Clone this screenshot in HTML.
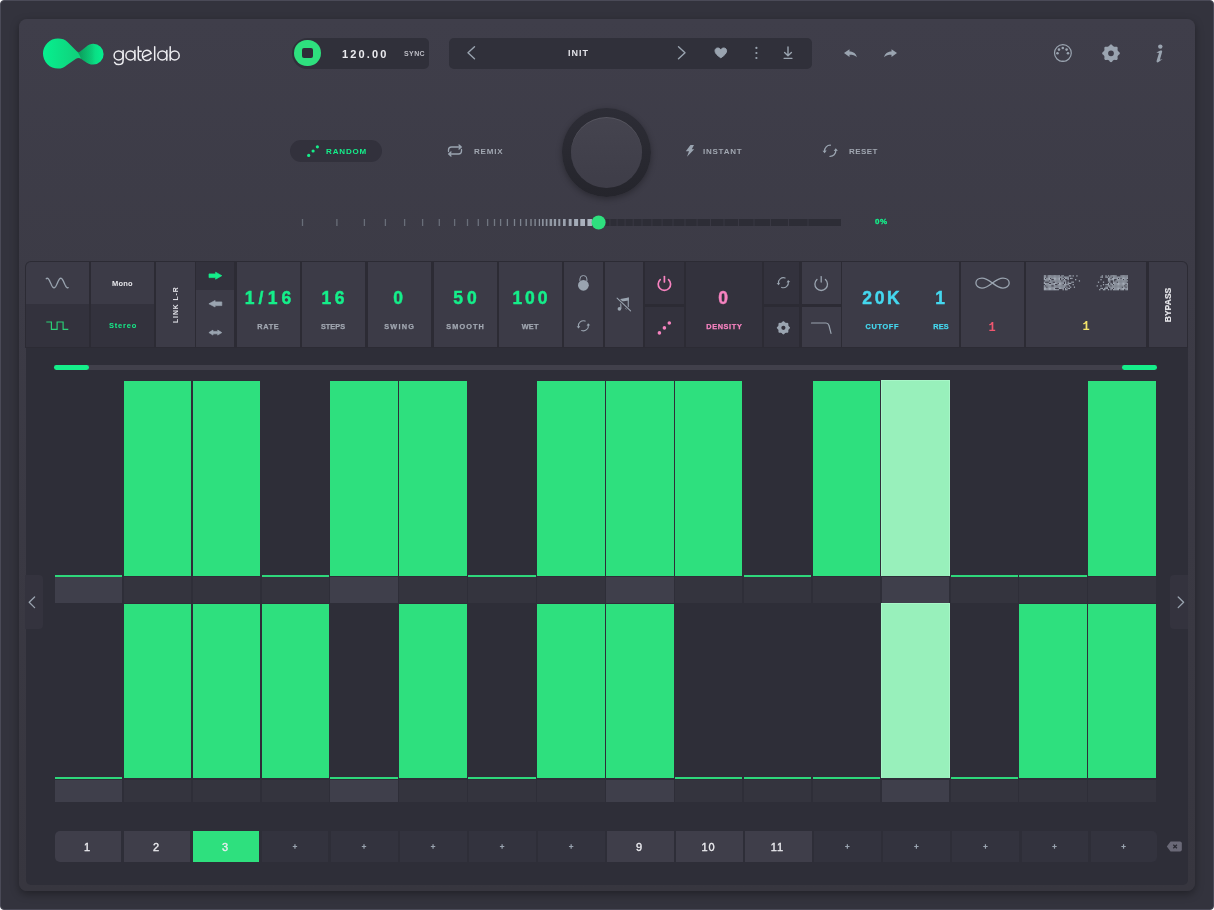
<!DOCTYPE html>
<html><head><meta charset="utf-8"><style>
*{box-sizing:border-box;margin:0;padding:0}
html,body{width:1214px;height:910px;overflow:hidden;background:#fff;font-family:"Liberation Sans",sans-serif}
.a{position:absolute}
.t{position:absolute;white-space:nowrap;font-weight:bold;line-height:1;will-change:transform}
svg{position:absolute;overflow:visible}
</style></head><body>
<div class="a" style="left:0;top:0;width:1214px;height:910px;background:#33333d;border:1px solid #4a4a57;border-radius:4px"></div>
<div class="a" style="left:19px;top:19px;width:1176px;height:872px;border-radius:8px;background:linear-gradient(#3f3e4a,#3c3b46 30%,#37363f);box-shadow:0 3px 8px rgba(0,0,0,.35)"></div>
<div class="a" style="left:25.5px;top:300px;width:1162.5px;height:584.5px;background:#2e2e38;border-radius:0 0 5px 5px"></div>
<svg style="left:0;top:0" width="1214" height="100">
<defs><linearGradient id="lg1" gradientUnits="userSpaceOnUse" x1="43" y1="0" x2="104" y2="0">
<stop offset="0" stop-color="#06f08f"/><stop offset=".55" stop-color="#10d27c"/><stop offset=".8" stop-color="#0bd880"/><stop offset="1" stop-color="#05f090"/></linearGradient></defs>
<path fill="url(#lg1)" d="M58,38.6 C62,38.6 65,39.5 68,42.5 L77,51.5 C78,52.5 79,52.5 80,51.8 L86.5,46.5 C88.5,44.8 90.8,43.8 93.2,43.8 A10.4,10.4 0 0 1 93.2,64.6 C90,64.6 87.5,63.5 85,61.5 L81,58.8 C79.5,57.8 77.5,57.8 76,58.8 L67,65 C64.5,67.5 61.5,68.6 58,68.6 A15,15 0 0 1 58,38.6 Z"/>
<linearGradient id="lg2" gradientUnits="userSpaceOnUse" x1="77" y1="0" x2="95" y2="0"><stop offset="0" stop-color="#04502c" stop-opacity=".45"/><stop offset="1" stop-color="#04502c" stop-opacity="0"/></linearGradient>
<path fill="url(#lg2)" d="M77.3,51.8 C78.2,52.4 79,52.4 80,51.8 L86.5,46.5 C88.5,44.8 90.8,43.8 93.2,43.8 L96,43.8 L96,64.6 L93.2,64.6 C90,64.6 87.5,63.5 85,61.5 L81,58.8 C80,56 78.8,53.5 77.3,51.8 Z"/>
<g fill="none" stroke="#ececf0" stroke-width="1.5" stroke-linecap="round">
<circle cx="118.6" cy="55.4" r="4.5"/><path d="M123.1,50.6 V60.5 C123.1,63.3 121,64.6 118.6,64.6 C116.7,64.6 115.3,63.6 114.6,62.3"/>
<circle cx="130.4" cy="55.4" r="4.5"/><path d="M134.9,50.6 V60.2"/>
<path d="M138.3,46.8 V57.5 C138.3,59.6 139.2,60.2 141,60.2 M138.3,51.2 H141.2"/>
<path d="M143.4,57 L151.2,53.4 C150.5,51.5 148.9,50.3 146.9,50.3 C144.4,50.3 142.4,52.5 142.4,55.4 C142.4,58.3 144.4,60.5 146.9,60.5 C148.6,60.5 150,59.6 150.8,58.3"/>
<path d="M154.7,46.8 V60.2"/>
<circle cx="162.3" cy="55.4" r="4.5"/><path d="M166.8,50.6 V60.2"/>
<circle cx="174.7" cy="55.4" r="4.5"/><path d="M170.2,46.8 V60.2"/>
</g></svg>
<div class="a" style="left:292px;top:38px;width:137px;height:31px;background:#30303a;border-radius:15.5px 5px 5px 15.5px"></div>
<div class="a" style="left:294px;top:39.8px;width:26.5px;height:26.5px;border-radius:50%;background:#2ee07e"></div>
<div class="a" style="left:302px;top:47.8px;width:10.5px;height:10.5px;border-radius:2px;background:#2e2d38"></div>
<div class="t" style="left:341.8px;top:49px;font-size:11px;letter-spacing:2.15px;color:#ebebef">120.00</div>
<div class="t" style="left:403.5px;top:49.5px;font-size:7px;letter-spacing:.4px;color:#bdbdc5">SYNC</div>
<div class="a" style="left:449px;top:38px;width:363px;height:31px;background:#30303a;border-radius:5px"></div>
<svg style="left:0;top:0" width="1" height="1"><g fill="none" stroke="#9aa4b0" stroke-width="1.4" stroke-linecap="round" stroke-linejoin="round"><path d="M474.5,46.8 L468,52.8 L474.5,58.8"/><path d="M678.5,46.8 L685,52.8 L678.5,58.8"/><path d="M788,47 V55.3 M784.6,52.4 L788,55.7 L791.4,52.4"/><path stroke-width="1.25" d="M784,58.3 H792"/></g><path fill="#9aa4b0" stroke="#9aa4b0" stroke-width="1" stroke-linejoin="round" d="M720.8,57.8 C716.9,55.3 715,53 715,50.8 C715,49.1 716.2,48 717.8,48 C719.1,48 720.1,48.7 720.8,49.6 C721.5,48.7 722.5,48 723.8,48 C725.4,48 726.6,49.1 726.6,50.8 C726.6,53 724.7,55.3 720.8,57.8 Z"/><g fill="#9aa4b0"><circle cx="756.4" cy="47.9" r="1.1"/><circle cx="756.4" cy="53" r="1.1"/><circle cx="756.4" cy="58" r="1.1"/></g></svg>
<div class="t" style="left:567.5px;top:49px;font-size:9px;letter-spacing:1px;color:#e2e2e8">INIT</div>
<svg style="left:0;top:0" width="1" height="1"><g fill="#9aa4b0"><path d="M844,53 L849.5,49.3 V51.5 C853.5,51.5 856.3,53.8 856.8,57.2 C855,55.3 852.7,54.7 849.5,54.7 V57 Z"/><path d="M897,53 L891.5,49.3 V51.5 C887.5,51.5 884.7,53.8 884.2,57.2 C886,55.3 888.3,54.7 891.5,54.7 V57 Z"/></g></svg>
<svg style="left:0;top:0" width="1" height="1"><circle cx="1062.9" cy="53.1" r="8.4" fill="none" stroke="#9aa4b0" stroke-width="1.2"/><g fill="#9aa4b0"><circle cx="1057.5" cy="53.3" r="1.3"/><circle cx="1059" cy="49.6" r="1.3"/><circle cx="1062.8" cy="48" r="1.3"/><circle cx="1066.6" cy="49.6" r="1.3"/><circle cx="1068" cy="53.3" r="1.3"/><path d="M1060.8,61.6 Q1062.8,59.4 1064.8,61.6 Z"/></g><path fill="#9aa4b0" fill-rule="evenodd" d="M1111.00,44.40 L1111.57,44.56 L1112.10,44.97 L1112.55,45.50 L1112.96,45.99 L1113.36,46.34 L1113.79,46.56 L1114.25,46.71 L1114.78,46.75 L1115.42,46.69 L1116.11,46.64 L1116.78,46.71 L1117.29,47.01 L1117.59,47.52 L1117.66,48.19 L1117.61,48.88 L1117.55,49.52 L1117.59,50.05 L1117.74,50.51 L1117.96,50.94 L1118.31,51.34 L1118.80,51.75 L1119.33,52.20 L1119.74,52.73 L1119.90,53.30 L1119.74,53.87 L1119.33,54.40 L1118.80,54.85 L1118.31,55.26 L1117.96,55.66 L1117.74,56.09 L1117.59,56.55 L1117.55,57.08 L1117.61,57.72 L1117.66,58.41 L1117.59,59.08 L1117.29,59.59 L1116.78,59.89 L1116.11,59.96 L1115.42,59.91 L1114.78,59.85 L1114.25,59.89 L1113.79,60.04 L1113.36,60.26 L1112.96,60.61 L1112.55,61.10 L1112.10,61.63 L1111.57,62.04 L1111.00,62.20 L1110.43,62.04 L1109.90,61.63 L1109.45,61.10 L1109.04,60.61 L1108.64,60.26 L1108.21,60.04 L1107.75,59.89 L1107.22,59.85 L1106.58,59.91 L1105.89,59.96 L1105.22,59.89 L1104.71,59.59 L1104.41,59.08 L1104.34,58.41 L1104.39,57.72 L1104.45,57.08 L1104.41,56.55 L1104.26,56.09 L1104.04,55.66 L1103.69,55.26 L1103.20,54.85 L1102.67,54.40 L1102.26,53.87 L1102.10,53.30 L1102.26,52.73 L1102.67,52.20 L1103.20,51.75 L1103.69,51.34 L1104.04,50.94 L1104.26,50.51 L1104.41,50.05 L1104.45,49.52 L1104.39,48.88 L1104.34,48.19 L1104.41,47.52 L1104.71,47.01 L1105.22,46.71 L1105.89,46.64 L1106.58,46.69 L1107.22,46.75 L1107.75,46.71 L1108.21,46.56 L1108.64,46.34 L1109.04,45.99 L1109.45,45.50 L1109.90,44.97 L1110.43,44.56 Z M1113.9,53.3 A2.9,2.9 0 1,0 1108.1,53.3 A2.9,2.9 0 1,0 1113.9,53.3 Z"/></svg>
<svg style="left:0;top:0" width="1" height="1"><g fill="#9aa4b0"><circle cx="1160.3" cy="46.6" r="2.2"/><path d="M1156.3,52.6 L1160.4,50.6 C1161.7,50.1 1162.4,50.9 1162.1,52.1 L1159.9,59.7 L1162.6,59.1 L1158.6,62.1 C1157.2,62.9 1156.2,62 1156.7,60.4 L1159,52.9 Z"/></g></svg>
<div class="a" style="left:289.5px;top:139.5px;width:92.5px;height:22.8px;background:#32313c;border-radius:11.4px"></div>
<svg style="left:0;top:0" width="1" height="1"><g fill="#15ee8a"><circle cx="308.7" cy="155.4" r="1.6"/><circle cx="313.1" cy="151" r="1.6"/><circle cx="317.4" cy="146.8" r="1.6"/></g></svg>
<div class="t" style="left:326px;top:147.7px;font-size:8px;letter-spacing:.85px;color:#15ee8a">RANDOM</div>
<svg style="left:0;top:0" width="1" height="1"><g fill="none" stroke="#9aa4b0" stroke-width="1.3" stroke-linecap="round" stroke-linejoin="round"><path d="M448.5,151.5 V150 C448.5,148 449.8,147 451.5,147 H461 M459,144.9 L461.3,147 L459,149.1"/><path d="M461.5,149.5 V151 C461.5,153 460.2,154 458.5,154 H449 M451,151.9 L448.7,154 L451,156.1"/></g></svg>
<div class="t" style="left:474px;top:147.7px;font-size:8px;letter-spacing:.8px;color:#a1a7b1">REMIX</div>
<svg style="left:0;top:0" width="1" height="1"><path fill="#9aa4b0" d="M690.5,144.9 L694,144.9 L691.8,149.2 L694.2,149.2 L687,156.7 L689,151.3 L685.8,151.3 Z"/></svg>
<div class="t" style="left:703px;top:147.7px;font-size:8px;letter-spacing:.75px;color:#a1a7b1">INSTANT</div>
<svg style="left:0;top:0" width="1" height="1"><path fill="none" stroke="#9aa4b0" stroke-width="1.3" stroke-linecap="round" d="M830.40,145.20 A5.6,5.6 0 0,0 824.60,151.00"/><path fill="#9aa4b0" d="M824.68,153.30 L822.49,150.77 L826.69,150.62 Z"/><path fill="none" stroke="#9aa4b0" stroke-width="1.3" stroke-linecap="round" d="M830.00,156.40 A5.6,5.6 0 0,0 835.80,150.60"/><path fill="#9aa4b0" d="M835.72,148.30 L837.91,150.83 L833.71,150.98 Z"/></svg>
<div class="t" style="left:849px;top:147.7px;font-size:8px;letter-spacing:.45px;color:#a1a7b1">RESET</div>
<div class="a" style="left:562px;top:107.5px;width:89px;height:89px;border-radius:50%;background:linear-gradient(#2d2d36,#25252c);box-shadow:0 2px 6px rgba(0,0,0,.3)"></div>
<div class="a" style="left:571px;top:117px;width:71px;height:71px;border-radius:50%;background:linear-gradient(#45444f,#3e3d48);box-shadow:inset 0 1px 0 rgba(255,255,255,.09)"></div>
<svg style="left:0;top:0" width="1" height="1"><rect x="301.85" y="219" width="1.30" height="7" fill="rgb(104, 109, 120)"/><rect x="336.25" y="219" width="1.30" height="7" fill="rgb(104, 109, 120)"/><rect x="363.75" y="219" width="1.30" height="7" fill="rgb(104, 109, 120)"/><rect x="384.75" y="219" width="1.30" height="7" fill="rgb(104, 109, 120)"/><rect x="403.95" y="219" width="1.30" height="7" fill="rgb(104, 109, 120)"/><rect x="421.95" y="219" width="1.30" height="7" fill="rgb(104, 109, 120)"/><rect x="438.65" y="219" width="1.30" height="7" fill="rgb(104, 109, 120)"/><rect x="453.95" y="219" width="1.30" height="7" fill="rgb(104, 109, 120)"/><rect x="466.85" y="219" width="1.30" height="7" fill="rgb(105, 110, 121)"/><rect x="477.65" y="219" width="1.30" height="7" fill="rgb(108, 113, 124)"/><rect x="486.95" y="219" width="1.30" height="7" fill="rgb(111, 116, 127)"/><rect x="493.85" y="219" width="1.30" height="7" fill="rgb(114, 119, 130)"/><rect x="499.95" y="219" width="1.30" height="7" fill="rgb(116, 122, 133)"/><rect x="506.75" y="219" width="1.30" height="7" fill="rgb(119, 125, 136)"/><rect x="513.85" y="219" width="1.30" height="7" fill="rgb(123, 129, 140)"/><rect x="519.95" y="219" width="1.30" height="7" fill="rgb(126, 132, 144)"/><rect x="525.55" y="219" width="1.30" height="7" fill="rgb(129, 136, 147)"/><rect x="530.35" y="219" width="1.30" height="7" fill="rgb(132, 139, 150)"/><rect x="534.45" y="219" width="1.30" height="7" fill="rgb(135, 141, 153)"/><rect x="538.75" y="219" width="1.30" height="7" fill="rgb(138, 144, 156)"/><rect x="541.95" y="219" width="1.70" height="7" fill="rgb(140, 146, 158)"/><rect x="545.75" y="219" width="1.70" height="7" fill="rgb(142, 149, 161)"/><rect x="549.60" y="219" width="2.50" height="7" fill="rgb(145, 152, 164)"/><rect x="553.80" y="219" width="2.30" height="7" fill="rgb(148, 155, 167)"/><rect x="558.30" y="219" width="2.00" height="7" fill="rgb(151, 158, 170)"/><rect x="563.00" y="219" width="2.70" height="7" fill="rgb(155, 162, 174)"/><rect x="568.70" y="219" width="2.90" height="7" fill="rgb(160, 167, 179)"/><rect x="574.10" y="219" width="4.00" height="7" fill="rgb(164, 172, 184)"/><rect x="580.30" y="219" width="4.70" height="7" fill="rgb(170, 177, 189)"/><rect x="587.45" y="219" width="4.50" height="7" fill="rgb(172, 180, 192)"/><rect x="605.4" y="219" width="235.6" height="7" fill="#2d2d36"/><rect x="609.4" y="219" width="1" height="7" fill="#393843"/><rect x="616.6" y="219" width="1" height="7" fill="#393843"/><rect x="624.6" y="219" width="1" height="7" fill="#393843"/><rect x="632.7" y="219" width="1" height="7" fill="#393843"/><rect x="641.5" y="219" width="1" height="7" fill="#393843"/><rect x="651.4" y="219" width="1" height="7" fill="#393843"/><rect x="661.6" y="219" width="1" height="7" fill="#393843"/><rect x="672.5" y="219" width="1" height="7" fill="#393843"/><rect x="684.5" y="219" width="1" height="7" fill="#393843"/><rect x="696.6" y="219" width="1" height="7" fill="#393843"/><rect x="710" y="219" width="1" height="7" fill="#393843"/><rect x="723.5" y="219" width="1" height="7" fill="#393843"/><rect x="738" y="219" width="1" height="7" fill="#393843"/><rect x="753.5" y="219" width="1" height="7" fill="#393843"/><rect x="770" y="219" width="1" height="7" fill="#393843"/><rect x="788" y="219" width="1" height="7" fill="#393843"/><rect x="807.5" y="219" width="1" height="7" fill="#393843"/><circle cx="598.6" cy="222.5" r="7" fill="#2ee07e"/></svg>
<div class="t" style="left:875px;top:218px;font-size:8px;letter-spacing:.5px;color:#15ee8a;-webkit-text-stroke:.3px #15ee8a">0%</div>
<div class="a" style="left:25px;top:260.5px;width:1162.8px;height:87px;background:#2c2b34;border-radius:6px 6px 0 0"></div>
<div class="a" style="left:25.8px;top:261.8px;width:63.00px;height:42.60px;background:#3c3b47;border-radius:5px 0 0 0"></div>
<div class="a" style="left:25.8px;top:304.4px;width:63.00px;height:42.60px;background:#33323d;"></div>
<div class="a" style="left:90.8px;top:261.8px;width:63.70px;height:42.60px;background:#3c3b47;"></div>
<div class="a" style="left:90.8px;top:304.4px;width:63.70px;height:42.60px;background:#33323d;"></div>
<div class="a" style="left:156px;top:261.8px;width:38.80px;height:85.20px;background:#3c3b47;"></div>
<div class="a" style="left:196.4px;top:261.8px;width:37.50px;height:28.20px;background:#33323d;"></div>
<div class="a" style="left:196.4px;top:290px;width:37.50px;height:57.00px;background:#3c3b47;"></div>
<div class="a" style="left:237px;top:261.8px;width:63.20px;height:85.20px;background:#3c3b47;"></div>
<div class="a" style="left:302px;top:261.8px;width:63.40px;height:85.20px;background:#3c3b47;"></div>
<div class="a" style="left:367.7px;top:261.8px;width:63.30px;height:85.20px;background:#3c3b47;"></div>
<div class="a" style="left:433.9px;top:261.8px;width:63.40px;height:85.20px;background:#3c3b47;"></div>
<div class="a" style="left:499.2px;top:261.8px;width:63.00px;height:85.20px;background:#3c3b47;"></div>
<div class="a" style="left:563.9px;top:261.8px;width:38.90px;height:85.20px;background:#3c3b47;"></div>
<div class="a" style="left:604.7px;top:261.8px;width:38.30px;height:85.20px;background:#3c3b47;"></div>
<div class="a" style="left:644.9px;top:261.8px;width:38.70px;height:42.70px;background:#33323d;"></div>
<div class="a" style="left:644.9px;top:306.5px;width:38.70px;height:40.50px;background:#33323d;"></div>
<div class="a" style="left:685.6px;top:261.8px;width:76.30px;height:85.20px;background:#33323d;"></div>
<div class="a" style="left:764.3px;top:261.8px;width:34.70px;height:42.70px;background:#33323d;"></div>
<div class="a" style="left:764.3px;top:306.5px;width:34.70px;height:40.50px;background:#33323d;"></div>
<div class="a" style="left:801.6px;top:261.8px;width:39.20px;height:42.70px;background:#3c3b47;"></div>
<div class="a" style="left:801.6px;top:306.5px;width:39.20px;height:40.50px;background:#3c3b47;"></div>
<div class="a" style="left:842.4px;top:261.8px;width:116.50px;height:85.20px;background:#3c3b47;"></div>
<div class="a" style="left:961px;top:261.8px;width:63.10px;height:85.20px;background:#3c3b47;"></div>
<div class="a" style="left:1026.2px;top:261.8px;width:120.10px;height:85.20px;background:#3c3b47;"></div>
<div class="a" style="left:1148.7px;top:261.8px;width:38.10px;height:85.20px;background:#3c3b47;border-radius:0 5px 0 0"></div>
<svg style="left:0;top:0" width="1" height="1"><path fill="none" stroke="#9aa4b0" stroke-width="1.3" stroke-linecap="round" stroke-linejoin="round" d="M46.20,278.70 L46.57,278.40 L46.93,278.24 L47.30,278.21 L47.67,278.31 L48.03,278.55 L48.40,278.92 L48.77,279.40 L49.13,279.99 L49.50,280.66 L49.87,281.40 L50.23,282.19 L50.60,283.00 L50.97,283.81 L51.33,284.60 L51.70,285.34 L52.07,286.01 L52.43,286.60 L52.80,287.08 L53.17,287.45 L53.53,287.69 L53.90,287.79 L54.27,287.76 L54.63,287.60 L55.00,287.30 L55.37,286.87 L55.73,286.34 L56.10,285.71 L56.47,285.01 L56.83,284.24 L57.20,283.44 L57.57,282.63 L57.93,281.83 L58.30,281.06 L58.67,280.35 L59.03,279.71 L59.40,279.17 L59.77,278.74 L60.13,278.43 L60.50,278.25 L60.87,278.20 L61.23,278.30 L61.60,278.52 L61.97,278.88 L62.33,279.35 L62.70,279.93 L63.07,280.60 L63.43,281.34 L63.80,282.12 L64.17,282.93 L64.53,283.74 L64.90,284.53 L65.27,285.27 L65.63,285.95 L66.00,286.55 L66.37,287.04 L66.73,287.42 L67.10,287.67 L67.47,287.79 L67.83,287.77 L68.20,287.62"/><path fill="none" stroke="#2bd277" stroke-width="1.15" d="M46.3,322 H51.4 V329.3 H57.1 V322 H63.1 V329.3 H68.3"/></svg>
<div class="t" style="left:111.8px;top:279.5px;font-size:7.5px;letter-spacing:.2px;color:#e6e6ea">Mono</div>
<div class="t" style="left:108.8px;top:321.5px;font-size:7.5px;letter-spacing:.8px;color:#15ee8a">Stereo</div>
<div class="t" style="left:157.5px;top:301.7px;width:36px;text-align:center;font-size:6.8px;letter-spacing:.95px;color:#e2e2e8;transform:rotate(-90deg);transform-origin:18px 3px">LINK L-R</div>
<svg style="left:0;top:0" width="1" height="1"><path fill="#15ee8a" stroke="#15ee8a" stroke-width=".7" stroke-linejoin="round" d="M209,273.9 H215.6 V272.2 L221.8,275.7 L215.6,279.2 V277.6 H209 Z"/><path fill="#9aa4b0" stroke="#9aa4b0" stroke-width=".7" stroke-linejoin="round" d="M221.8,301.9 H215.1 V300.5 L208.9,303.8 L215.1,307 V305.6 H221.8 Z"/><path fill="#9aa4b0" stroke="#9aa4b0" stroke-width=".7" stroke-linejoin="round" d="M208.9,332.6 L213,330.1 V331.4 H217.7 V330.1 L221.8,332.6 L217.7,335.1 V333.8 H213 V335.1 Z"/></svg>
<div class="t" style="left:208.10000000000002px;top:290px;width:120px;text-align:center;font-size:17.5px;letter-spacing:4.2px;text-indent:4.2px;color:#15ee8a;-webkit-text-stroke:.45px #15ee8a">1/16</div>
<div class="t" style="left:208.10000000000002px;top:323px;width:120px;text-align:center;font-size:7.3px;letter-spacing:0.65px;text-indent:0.65px;color:#a1a7b1;-webkit-text-stroke:.25px #a1a7b1">RATE</div>
<div class="t" style="left:273.4px;top:290px;width:120px;text-align:center;font-size:17.5px;letter-spacing:3.3px;text-indent:3.3px;color:#15ee8a;-webkit-text-stroke:.45px #15ee8a">16</div>
<div class="t" style="left:273.4px;top:323px;width:120px;text-align:center;font-size:7.3px;letter-spacing:0.05px;text-indent:0.05px;color:#a1a7b1;-webkit-text-stroke:.25px #a1a7b1">STEPS</div>
<div class="t" style="left:337.9px;top:290px;width:120px;text-align:center;font-size:17.5px;letter-spacing:2.5px;text-indent:2.5px;color:#15ee8a;-webkit-text-stroke:.45px #15ee8a">0</div>
<div class="t" style="left:338.5px;top:323px;width:120px;text-align:center;font-size:7.3px;letter-spacing:1.25px;text-indent:1.25px;color:#a1a7b1;-webkit-text-stroke:.25px #a1a7b1">SWING</div>
<div class="t" style="left:404.5px;top:290px;width:120px;text-align:center;font-size:17.5px;letter-spacing:3.8px;text-indent:3.8px;color:#15ee8a;-webkit-text-stroke:.45px #15ee8a">50</div>
<div class="t" style="left:404.8px;top:323px;width:120px;text-align:center;font-size:7.3px;letter-spacing:1.1px;text-indent:1.1px;color:#a1a7b1;-webkit-text-stroke:.25px #a1a7b1">SMOOTH</div>
<div class="t" style="left:470.20000000000005px;top:290px;width:120px;text-align:center;font-size:17.5px;letter-spacing:3.0px;text-indent:3.0px;color:#15ee8a;-webkit-text-stroke:.45px #15ee8a">100</div>
<div class="t" style="left:470.20000000000005px;top:323px;width:120px;text-align:center;font-size:7.3px;letter-spacing:0.25px;text-indent:0.25px;color:#a1a7b1;-webkit-text-stroke:.25px #a1a7b1">WET</div>
<div class="t" style="left:662.7px;top:290px;width:120px;text-align:center;font-size:17.5px;letter-spacing:2.5px;text-indent:2.5px;color:#f783c0;-webkit-text-stroke:.45px #f783c0">0</div>
<div class="t" style="left:663.5px;top:323px;width:120px;text-align:center;font-size:7.3px;letter-spacing:0.65px;text-indent:0.65px;color:#f783c0;-webkit-text-stroke:.25px #f783c0">DENSITY</div>
<div class="t" style="left:821.3px;top:290px;width:120px;text-align:center;font-size:17.5px;letter-spacing:2.7px;text-indent:2.7px;color:#45d8ef;-webkit-text-stroke:.45px #45d8ef">20K</div>
<div class="t" style="left:822px;top:323px;width:120px;text-align:center;font-size:7.3px;letter-spacing:0.7px;text-indent:0.7px;color:#45d8ef;-webkit-text-stroke:.25px #45d8ef">CUTOFF</div>
<div class="t" style="left:879.7px;top:290px;width:120px;text-align:center;font-size:17.5px;letter-spacing:2.5px;text-indent:2.5px;color:#45d8ef;-webkit-text-stroke:.45px #45d8ef">1</div>
<div class="t" style="left:881.1px;top:323px;width:120px;text-align:center;font-size:7.3px;letter-spacing:0.2px;text-indent:0.2px;color:#45d8ef;-webkit-text-stroke:.25px #45d8ef">RES</div>
<div class="t" style="left:961.6px;top:321.6px;width:60px;text-align:center;font-size:12px;font-family:'Liberation Mono',monospace;color:#f0566f">1</div>
<div class="t" style="left:1055.6px;top:321.3px;width:60px;text-align:center;font-size:12px;font-family:'Liberation Mono',monospace;color:#f2e36b">1</div>
<div class="t" style="left:1150px;top:300.8px;width:36px;text-align:center;font-size:8.5px;letter-spacing:.05px;text-indent:.05px;color:#e6e6ea;-webkit-text-stroke:.2px #e6e6ea;transform:rotate(-90deg);transform-origin:18px 4px">BYPASS</div>
<svg style="left:0;top:0" width="1" height="1"><path fill="none" stroke="#9aa4b0" stroke-width="1" d="M579.9,281 V279 A3.5,3.5 0 0,1 586.9,279 V281"/><circle cx="583.4" cy="285.3" r="5.4" fill="#9aa4b0"/><path fill="none" stroke="#9aa4b0" stroke-width="1.1" stroke-linecap="round" d="M585.11,321.10 A5.0,5.0 0 0,0 578.45,326.50"/><path fill="#9aa4b0" d="M578.72,328.46 L576.62,326.45 L580.19,325.95 Z"/><path fill="none" stroke="#9aa4b0" stroke-width="1.1" stroke-linecap="round" d="M581.69,330.50 A5.0,5.0 0 0,0 588.35,325.10"/><path fill="#9aa4b0" d="M588.08,323.14 L590.18,325.15 L586.61,325.65 Z"/><path fill="none" stroke="#9aa4b0" stroke-width="1.1" stroke-linecap="round" d="M785.11,278.00 A5.0,5.0 0 0,0 778.45,283.40"/><path fill="#9aa4b0" d="M778.72,285.36 L776.62,283.35 L780.19,282.85 Z"/><path fill="none" stroke="#9aa4b0" stroke-width="1.1" stroke-linecap="round" d="M781.69,287.40 A5.0,5.0 0 0,0 788.35,282.00"/><path fill="#9aa4b0" d="M788.08,280.04 L790.18,282.05 L786.61,282.55 Z"/><g fill="#9aa4b0"><circle cx="619.4" cy="308.9" r="1.8"/><rect x="620.3" y="299.3" width="1.1" height="9.6"/><path d="M620.3,299 L628.8,297.6 V300.4 L620.3,301.8 Z"/><rect x="627.7" y="297.6" width="1.1" height="10"/><circle cx="626.8" cy="307.8" r="1.6"/></g><path stroke="#3c3b47" stroke-width="2.8" d="M617.1,298.2 L630.6,310.9"/><path stroke="#9aa4b0" stroke-width="1.1" stroke-linecap="round" d="M617.1,298.2 L630.6,310.9"/><g fill="none" stroke="#f783c0" stroke-width="1.7" stroke-linecap="round"><path d="M668.55,279.59 A6.2,6.2 0 1,1 660.25,279.59"/><path d="M664.4,276.6 V282"/></g><g fill="#f783c0"><circle cx="659.4" cy="332.9" r="1.8"/><circle cx="664.4" cy="327.9" r="1.8"/><circle cx="669.3" cy="323" r="1.8"/></g><path fill="#9aa4b0" fill-rule="evenodd" d="M783.40,321.20 L783.83,321.31 L784.22,321.60 L784.56,321.97 L784.87,322.31 L785.18,322.56 L785.50,322.72 L785.85,322.84 L786.24,322.88 L786.70,322.86 L787.21,322.84 L787.69,322.91 L788.07,323.13 L788.29,323.51 L788.36,323.99 L788.34,324.50 L788.32,324.96 L788.36,325.35 L788.48,325.70 L788.64,326.02 L788.89,326.33 L789.23,326.64 L789.60,326.98 L789.89,327.37 L790.00,327.80 L789.89,328.23 L789.60,328.62 L789.23,328.96 L788.89,329.27 L788.64,329.58 L788.48,329.90 L788.36,330.25 L788.32,330.64 L788.34,331.10 L788.36,331.61 L788.29,332.09 L788.07,332.47 L787.69,332.69 L787.21,332.76 L786.70,332.74 L786.24,332.72 L785.85,332.76 L785.50,332.88 L785.18,333.04 L784.87,333.29 L784.56,333.63 L784.22,334.00 L783.83,334.29 L783.40,334.40 L782.97,334.29 L782.58,334.00 L782.24,333.63 L781.93,333.29 L781.62,333.04 L781.30,332.88 L780.95,332.76 L780.56,332.72 L780.10,332.74 L779.59,332.76 L779.11,332.69 L778.73,332.47 L778.51,332.09 L778.44,331.61 L778.46,331.10 L778.48,330.64 L778.44,330.25 L778.32,329.90 L778.16,329.58 L777.91,329.27 L777.57,328.96 L777.20,328.62 L776.91,328.23 L776.80,327.80 L776.91,327.37 L777.20,326.98 L777.57,326.64 L777.91,326.33 L778.16,326.02 L778.32,325.70 L778.44,325.35 L778.48,324.96 L778.46,324.50 L778.44,323.99 L778.51,323.51 L778.73,323.13 L779.11,322.91 L779.59,322.84 L780.10,322.86 L780.56,322.88 L780.95,322.84 L781.30,322.72 L781.62,322.56 L781.93,322.31 L782.24,321.97 L782.58,321.60 L782.97,321.31 Z M785.5,327.8 A2.1,2.1 0 1,0 781.3,327.8 A2.1,2.1 0 1,0 785.5,327.8 Z"/><g fill="none" stroke="#9aa4b0" stroke-width="1.3" stroke-linecap="round"><path d="M825.42,279.52 A6.3,6.3 0 1,1 816.98,279.52"/><path d="M821.2,276.6 V282"/></g><path fill="none" stroke="#9aa4b0" stroke-width="1.2" stroke-linecap="round" d="M811.5,323 H826 C828,323 828.5,324 829,325.5 L831,333.3"/><path fill="none" stroke="#9aa4b0" stroke-width="1.3" d="M992.4,283 C989,280.4 986,278.1 982,278.1 C978.3,278.1 975.9,280.3 975.9,283 C975.9,285.7 978.3,288.1 982,288.1 C986,288.1 989,285.6 992.4,283 C995.8,280.4 999,278.1 1003,278.1 C1006.7,278.1 1009.2,280.3 1009.2,283 C1009.2,285.7 1006.7,288.1 1003,288.1 C999,288.1 995.8,285.6 992.4,283 Z"/></svg>
<svg style="left:0;top:0" width="1" height="1"><g fill="#a3abb6"><rect x="1043.80" y="275.30" width="1.25" height="1.25"/><rect x="1045.05" y="275.30" width="1.25" height="1.25"/><rect x="1047.55" y="275.30" width="1.25" height="1.25"/><rect x="1048.80" y="275.30" width="1.25" height="1.25"/><rect x="1050.05" y="275.30" width="1.25" height="1.25"/><rect x="1051.30" y="275.30" width="1.25" height="1.25"/><rect x="1052.55" y="275.30" width="1.25" height="1.25"/><rect x="1053.80" y="275.30" width="1.25" height="1.25"/><rect x="1055.05" y="275.30" width="1.25" height="1.25"/><rect x="1056.30" y="275.30" width="1.25" height="1.25"/><rect x="1057.55" y="275.30" width="1.25" height="1.25"/><rect x="1058.80" y="275.30" width="1.25" height="1.25"/><rect x="1061.30" y="275.30" width="1.25" height="1.25"/><rect x="1062.55" y="275.30" width="1.25" height="1.25"/><rect x="1068.80" y="275.30" width="1.25" height="1.25"/><rect x="1070.05" y="275.30" width="1.25" height="1.25"/><rect x="1072.55" y="275.30" width="1.25" height="1.25"/><rect x="1076.30" y="275.30" width="1.25" height="1.25"/><rect x="1126.65" y="275.30" width="1.25" height="1.25"/><rect x="1125.40" y="275.30" width="1.25" height="1.25"/><rect x="1124.15" y="275.30" width="1.25" height="1.25"/><rect x="1122.90" y="275.30" width="1.25" height="1.25"/><rect x="1121.65" y="275.30" width="1.25" height="1.25"/><rect x="1120.40" y="275.30" width="1.25" height="1.25"/><rect x="1115.40" y="275.30" width="1.25" height="1.25"/><rect x="1114.15" y="275.30" width="1.25" height="1.25"/><rect x="1112.90" y="275.30" width="1.25" height="1.25"/><rect x="1111.65" y="275.30" width="1.25" height="1.25"/><rect x="1110.40" y="275.30" width="1.25" height="1.25"/><rect x="1107.90" y="275.30" width="1.25" height="1.25"/><rect x="1105.40" y="275.30" width="1.25" height="1.25"/><rect x="1101.65" y="275.30" width="1.25" height="1.25"/><rect x="1043.80" y="276.55" width="1.25" height="1.25"/><rect x="1045.05" y="276.55" width="1.25" height="1.25"/><rect x="1047.55" y="276.55" width="1.25" height="1.25"/><rect x="1048.80" y="276.55" width="1.25" height="1.25"/><rect x="1050.05" y="276.55" width="1.25" height="1.25"/><rect x="1051.30" y="276.55" width="1.25" height="1.25"/><rect x="1052.55" y="276.55" width="1.25" height="1.25"/><rect x="1053.80" y="276.55" width="1.25" height="1.25"/><rect x="1055.05" y="276.55" width="1.25" height="1.25"/><rect x="1056.30" y="276.55" width="1.25" height="1.25"/><rect x="1057.55" y="276.55" width="1.25" height="1.25"/><rect x="1058.80" y="276.55" width="1.25" height="1.25"/><rect x="1060.05" y="276.55" width="1.25" height="1.25"/><rect x="1061.30" y="276.55" width="1.25" height="1.25"/><rect x="1063.80" y="276.55" width="1.25" height="1.25"/><rect x="1065.05" y="276.55" width="1.25" height="1.25"/><rect x="1066.30" y="276.55" width="1.25" height="1.25"/><rect x="1067.55" y="276.55" width="1.25" height="1.25"/><rect x="1126.65" y="276.55" width="1.25" height="1.25"/><rect x="1125.40" y="276.55" width="1.25" height="1.25"/><rect x="1124.15" y="276.55" width="1.25" height="1.25"/><rect x="1122.90" y="276.55" width="1.25" height="1.25"/><rect x="1121.65" y="276.55" width="1.25" height="1.25"/><rect x="1120.40" y="276.55" width="1.25" height="1.25"/><rect x="1119.15" y="276.55" width="1.25" height="1.25"/><rect x="1117.90" y="276.55" width="1.25" height="1.25"/><rect x="1116.65" y="276.55" width="1.25" height="1.25"/><rect x="1115.40" y="276.55" width="1.25" height="1.25"/><rect x="1114.15" y="276.55" width="1.25" height="1.25"/><rect x="1112.90" y="276.55" width="1.25" height="1.25"/><rect x="1110.40" y="276.55" width="1.25" height="1.25"/><rect x="1109.15" y="276.55" width="1.25" height="1.25"/><rect x="1106.65" y="276.55" width="1.25" height="1.25"/><rect x="1105.40" y="276.55" width="1.25" height="1.25"/><rect x="1101.65" y="276.55" width="1.25" height="1.25"/><rect x="1100.40" y="276.55" width="1.25" height="1.25"/><rect x="1043.80" y="277.80" width="1.25" height="1.25"/><rect x="1046.30" y="277.80" width="1.25" height="1.25"/><rect x="1047.55" y="277.80" width="1.25" height="1.25"/><rect x="1048.80" y="277.80" width="1.25" height="1.25"/><rect x="1051.30" y="277.80" width="1.25" height="1.25"/><rect x="1052.55" y="277.80" width="1.25" height="1.25"/><rect x="1053.80" y="277.80" width="1.25" height="1.25"/><rect x="1055.05" y="277.80" width="1.25" height="1.25"/><rect x="1056.30" y="277.80" width="1.25" height="1.25"/><rect x="1057.55" y="277.80" width="1.25" height="1.25"/><rect x="1058.80" y="277.80" width="1.25" height="1.25"/><rect x="1061.30" y="277.80" width="1.25" height="1.25"/><rect x="1062.55" y="277.80" width="1.25" height="1.25"/><rect x="1065.05" y="277.80" width="1.25" height="1.25"/><rect x="1066.30" y="277.80" width="1.25" height="1.25"/><rect x="1067.55" y="277.80" width="1.25" height="1.25"/><rect x="1070.05" y="277.80" width="1.25" height="1.25"/><rect x="1071.30" y="277.80" width="1.25" height="1.25"/><rect x="1126.65" y="277.80" width="1.25" height="1.25"/><rect x="1125.40" y="277.80" width="1.25" height="1.25"/><rect x="1124.15" y="277.80" width="1.25" height="1.25"/><rect x="1122.90" y="277.80" width="1.25" height="1.25"/><rect x="1121.65" y="277.80" width="1.25" height="1.25"/><rect x="1119.15" y="277.80" width="1.25" height="1.25"/><rect x="1116.65" y="277.80" width="1.25" height="1.25"/><rect x="1115.40" y="277.80" width="1.25" height="1.25"/><rect x="1114.15" y="277.80" width="1.25" height="1.25"/><rect x="1112.90" y="277.80" width="1.25" height="1.25"/><rect x="1111.65" y="277.80" width="1.25" height="1.25"/><rect x="1109.15" y="277.80" width="1.25" height="1.25"/><rect x="1107.90" y="277.80" width="1.25" height="1.25"/><rect x="1043.80" y="279.05" width="1.25" height="1.25"/><rect x="1045.05" y="279.05" width="1.25" height="1.25"/><rect x="1046.30" y="279.05" width="1.25" height="1.25"/><rect x="1047.55" y="279.05" width="1.25" height="1.25"/><rect x="1048.80" y="279.05" width="1.25" height="1.25"/><rect x="1050.05" y="279.05" width="1.25" height="1.25"/><rect x="1053.80" y="279.05" width="1.25" height="1.25"/><rect x="1055.05" y="279.05" width="1.25" height="1.25"/><rect x="1056.30" y="279.05" width="1.25" height="1.25"/><rect x="1057.55" y="279.05" width="1.25" height="1.25"/><rect x="1058.80" y="279.05" width="1.25" height="1.25"/><rect x="1061.30" y="279.05" width="1.25" height="1.25"/><rect x="1063.80" y="279.05" width="1.25" height="1.25"/><rect x="1067.55" y="279.05" width="1.25" height="1.25"/><rect x="1075.05" y="279.05" width="1.25" height="1.25"/><rect x="1125.40" y="279.05" width="1.25" height="1.25"/><rect x="1124.15" y="279.05" width="1.25" height="1.25"/><rect x="1121.65" y="279.05" width="1.25" height="1.25"/><rect x="1120.40" y="279.05" width="1.25" height="1.25"/><rect x="1119.15" y="279.05" width="1.25" height="1.25"/><rect x="1117.90" y="279.05" width="1.25" height="1.25"/><rect x="1116.65" y="279.05" width="1.25" height="1.25"/><rect x="1112.90" y="279.05" width="1.25" height="1.25"/><rect x="1111.65" y="279.05" width="1.25" height="1.25"/><rect x="1110.40" y="279.05" width="1.25" height="1.25"/><rect x="1109.15" y="279.05" width="1.25" height="1.25"/><rect x="1107.90" y="279.05" width="1.25" height="1.25"/><rect x="1100.40" y="279.05" width="1.25" height="1.25"/><rect x="1045.05" y="280.30" width="1.25" height="1.25"/><rect x="1046.30" y="280.30" width="1.25" height="1.25"/><rect x="1047.55" y="280.30" width="1.25" height="1.25"/><rect x="1050.05" y="280.30" width="1.25" height="1.25"/><rect x="1051.30" y="280.30" width="1.25" height="1.25"/><rect x="1052.55" y="280.30" width="1.25" height="1.25"/><rect x="1053.80" y="280.30" width="1.25" height="1.25"/><rect x="1055.05" y="280.30" width="1.25" height="1.25"/><rect x="1056.30" y="280.30" width="1.25" height="1.25"/><rect x="1057.55" y="280.30" width="1.25" height="1.25"/><rect x="1058.80" y="280.30" width="1.25" height="1.25"/><rect x="1060.05" y="280.30" width="1.25" height="1.25"/><rect x="1062.55" y="280.30" width="1.25" height="1.25"/><rect x="1063.80" y="280.30" width="1.25" height="1.25"/><rect x="1065.05" y="280.30" width="1.25" height="1.25"/><rect x="1078.80" y="280.30" width="1.25" height="1.25"/><rect x="1126.65" y="280.30" width="1.25" height="1.25"/><rect x="1125.40" y="280.30" width="1.25" height="1.25"/><rect x="1124.15" y="280.30" width="1.25" height="1.25"/><rect x="1122.90" y="280.30" width="1.25" height="1.25"/><rect x="1121.65" y="280.30" width="1.25" height="1.25"/><rect x="1120.40" y="280.30" width="1.25" height="1.25"/><rect x="1119.15" y="280.30" width="1.25" height="1.25"/><rect x="1117.90" y="280.30" width="1.25" height="1.25"/><rect x="1116.65" y="280.30" width="1.25" height="1.25"/><rect x="1115.40" y="280.30" width="1.25" height="1.25"/><rect x="1112.90" y="280.30" width="1.25" height="1.25"/><rect x="1109.15" y="280.30" width="1.25" height="1.25"/><rect x="1107.90" y="280.30" width="1.25" height="1.25"/><rect x="1043.80" y="281.55" width="1.25" height="1.25"/><rect x="1048.80" y="281.55" width="1.25" height="1.25"/><rect x="1050.05" y="281.55" width="1.25" height="1.25"/><rect x="1051.30" y="281.55" width="1.25" height="1.25"/><rect x="1055.05" y="281.55" width="1.25" height="1.25"/><rect x="1056.30" y="281.55" width="1.25" height="1.25"/><rect x="1057.55" y="281.55" width="1.25" height="1.25"/><rect x="1058.80" y="281.55" width="1.25" height="1.25"/><rect x="1060.05" y="281.55" width="1.25" height="1.25"/><rect x="1061.30" y="281.55" width="1.25" height="1.25"/><rect x="1062.55" y="281.55" width="1.25" height="1.25"/><rect x="1065.05" y="281.55" width="1.25" height="1.25"/><rect x="1067.55" y="281.55" width="1.25" height="1.25"/><rect x="1071.30" y="281.55" width="1.25" height="1.25"/><rect x="1072.55" y="281.55" width="1.25" height="1.25"/><rect x="1125.40" y="281.55" width="1.25" height="1.25"/><rect x="1124.15" y="281.55" width="1.25" height="1.25"/><rect x="1122.90" y="281.55" width="1.25" height="1.25"/><rect x="1121.65" y="281.55" width="1.25" height="1.25"/><rect x="1120.40" y="281.55" width="1.25" height="1.25"/><rect x="1119.15" y="281.55" width="1.25" height="1.25"/><rect x="1117.90" y="281.55" width="1.25" height="1.25"/><rect x="1115.40" y="281.55" width="1.25" height="1.25"/><rect x="1114.15" y="281.55" width="1.25" height="1.25"/><rect x="1112.90" y="281.55" width="1.25" height="1.25"/><rect x="1109.15" y="281.55" width="1.25" height="1.25"/><rect x="1102.90" y="281.55" width="1.25" height="1.25"/><rect x="1097.90" y="281.55" width="1.25" height="1.25"/><rect x="1043.80" y="282.80" width="1.25" height="1.25"/><rect x="1045.05" y="282.80" width="1.25" height="1.25"/><rect x="1046.30" y="282.80" width="1.25" height="1.25"/><rect x="1047.55" y="282.80" width="1.25" height="1.25"/><rect x="1051.30" y="282.80" width="1.25" height="1.25"/><rect x="1052.55" y="282.80" width="1.25" height="1.25"/><rect x="1053.80" y="282.80" width="1.25" height="1.25"/><rect x="1055.05" y="282.80" width="1.25" height="1.25"/><rect x="1056.30" y="282.80" width="1.25" height="1.25"/><rect x="1058.80" y="282.80" width="1.25" height="1.25"/><rect x="1060.05" y="282.80" width="1.25" height="1.25"/><rect x="1061.30" y="282.80" width="1.25" height="1.25"/><rect x="1062.55" y="282.80" width="1.25" height="1.25"/><rect x="1065.05" y="282.80" width="1.25" height="1.25"/><rect x="1067.55" y="282.80" width="1.25" height="1.25"/><rect x="1068.80" y="282.80" width="1.25" height="1.25"/><rect x="1070.05" y="282.80" width="1.25" height="1.25"/><rect x="1126.65" y="282.80" width="1.25" height="1.25"/><rect x="1125.40" y="282.80" width="1.25" height="1.25"/><rect x="1124.15" y="282.80" width="1.25" height="1.25"/><rect x="1122.90" y="282.80" width="1.25" height="1.25"/><rect x="1121.65" y="282.80" width="1.25" height="1.25"/><rect x="1120.40" y="282.80" width="1.25" height="1.25"/><rect x="1119.15" y="282.80" width="1.25" height="1.25"/><rect x="1117.90" y="282.80" width="1.25" height="1.25"/><rect x="1116.65" y="282.80" width="1.25" height="1.25"/><rect x="1115.40" y="282.80" width="1.25" height="1.25"/><rect x="1114.15" y="282.80" width="1.25" height="1.25"/><rect x="1112.90" y="282.80" width="1.25" height="1.25"/><rect x="1110.40" y="282.80" width="1.25" height="1.25"/><rect x="1107.90" y="282.80" width="1.25" height="1.25"/><rect x="1045.05" y="284.05" width="1.25" height="1.25"/><rect x="1046.30" y="284.05" width="1.25" height="1.25"/><rect x="1047.55" y="284.05" width="1.25" height="1.25"/><rect x="1048.80" y="284.05" width="1.25" height="1.25"/><rect x="1050.05" y="284.05" width="1.25" height="1.25"/><rect x="1051.30" y="284.05" width="1.25" height="1.25"/><rect x="1052.55" y="284.05" width="1.25" height="1.25"/><rect x="1053.80" y="284.05" width="1.25" height="1.25"/><rect x="1057.55" y="284.05" width="1.25" height="1.25"/><rect x="1058.80" y="284.05" width="1.25" height="1.25"/><rect x="1060.05" y="284.05" width="1.25" height="1.25"/><rect x="1061.30" y="284.05" width="1.25" height="1.25"/><rect x="1063.80" y="284.05" width="1.25" height="1.25"/><rect x="1065.05" y="284.05" width="1.25" height="1.25"/><rect x="1066.30" y="284.05" width="1.25" height="1.25"/><rect x="1067.55" y="284.05" width="1.25" height="1.25"/><rect x="1072.55" y="284.05" width="1.25" height="1.25"/><rect x="1126.65" y="284.05" width="1.25" height="1.25"/><rect x="1124.15" y="284.05" width="1.25" height="1.25"/><rect x="1122.90" y="284.05" width="1.25" height="1.25"/><rect x="1121.65" y="284.05" width="1.25" height="1.25"/><rect x="1120.40" y="284.05" width="1.25" height="1.25"/><rect x="1119.15" y="284.05" width="1.25" height="1.25"/><rect x="1117.90" y="284.05" width="1.25" height="1.25"/><rect x="1116.65" y="284.05" width="1.25" height="1.25"/><rect x="1115.40" y="284.05" width="1.25" height="1.25"/><rect x="1114.15" y="284.05" width="1.25" height="1.25"/><rect x="1111.65" y="284.05" width="1.25" height="1.25"/><rect x="1110.40" y="284.05" width="1.25" height="1.25"/><rect x="1107.90" y="284.05" width="1.25" height="1.25"/><rect x="1106.65" y="284.05" width="1.25" height="1.25"/><rect x="1105.40" y="284.05" width="1.25" height="1.25"/><rect x="1102.90" y="284.05" width="1.25" height="1.25"/><rect x="1043.80" y="285.30" width="1.25" height="1.25"/><rect x="1046.30" y="285.30" width="1.25" height="1.25"/><rect x="1047.55" y="285.30" width="1.25" height="1.25"/><rect x="1048.80" y="285.30" width="1.25" height="1.25"/><rect x="1050.05" y="285.30" width="1.25" height="1.25"/><rect x="1053.80" y="285.30" width="1.25" height="1.25"/><rect x="1055.05" y="285.30" width="1.25" height="1.25"/><rect x="1056.30" y="285.30" width="1.25" height="1.25"/><rect x="1057.55" y="285.30" width="1.25" height="1.25"/><rect x="1058.80" y="285.30" width="1.25" height="1.25"/><rect x="1060.05" y="285.30" width="1.25" height="1.25"/><rect x="1061.30" y="285.30" width="1.25" height="1.25"/><rect x="1062.55" y="285.30" width="1.25" height="1.25"/><rect x="1063.80" y="285.30" width="1.25" height="1.25"/><rect x="1065.05" y="285.30" width="1.25" height="1.25"/><rect x="1068.80" y="285.30" width="1.25" height="1.25"/><rect x="1126.65" y="285.30" width="1.25" height="1.25"/><rect x="1125.40" y="285.30" width="1.25" height="1.25"/><rect x="1122.90" y="285.30" width="1.25" height="1.25"/><rect x="1121.65" y="285.30" width="1.25" height="1.25"/><rect x="1120.40" y="285.30" width="1.25" height="1.25"/><rect x="1119.15" y="285.30" width="1.25" height="1.25"/><rect x="1117.90" y="285.30" width="1.25" height="1.25"/><rect x="1116.65" y="285.30" width="1.25" height="1.25"/><rect x="1115.40" y="285.30" width="1.25" height="1.25"/><rect x="1114.15" y="285.30" width="1.25" height="1.25"/><rect x="1112.90" y="285.30" width="1.25" height="1.25"/><rect x="1111.65" y="285.30" width="1.25" height="1.25"/><rect x="1109.15" y="285.30" width="1.25" height="1.25"/><rect x="1107.90" y="285.30" width="1.25" height="1.25"/><rect x="1100.40" y="285.30" width="1.25" height="1.25"/><rect x="1096.65" y="285.30" width="1.25" height="1.25"/><rect x="1043.80" y="286.55" width="1.25" height="1.25"/><rect x="1045.05" y="286.55" width="1.25" height="1.25"/><rect x="1047.55" y="286.55" width="1.25" height="1.25"/><rect x="1048.80" y="286.55" width="1.25" height="1.25"/><rect x="1050.05" y="286.55" width="1.25" height="1.25"/><rect x="1051.30" y="286.55" width="1.25" height="1.25"/><rect x="1052.55" y="286.55" width="1.25" height="1.25"/><rect x="1053.80" y="286.55" width="1.25" height="1.25"/><rect x="1055.05" y="286.55" width="1.25" height="1.25"/><rect x="1056.30" y="286.55" width="1.25" height="1.25"/><rect x="1057.55" y="286.55" width="1.25" height="1.25"/><rect x="1058.80" y="286.55" width="1.25" height="1.25"/><rect x="1060.05" y="286.55" width="1.25" height="1.25"/><rect x="1061.30" y="286.55" width="1.25" height="1.25"/><rect x="1062.55" y="286.55" width="1.25" height="1.25"/><rect x="1063.80" y="286.55" width="1.25" height="1.25"/><rect x="1066.30" y="286.55" width="1.25" height="1.25"/><rect x="1070.05" y="286.55" width="1.25" height="1.25"/><rect x="1073.80" y="286.55" width="1.25" height="1.25"/><rect x="1126.65" y="286.55" width="1.25" height="1.25"/><rect x="1124.15" y="286.55" width="1.25" height="1.25"/><rect x="1122.90" y="286.55" width="1.25" height="1.25"/><rect x="1120.40" y="286.55" width="1.25" height="1.25"/><rect x="1119.15" y="286.55" width="1.25" height="1.25"/><rect x="1117.90" y="286.55" width="1.25" height="1.25"/><rect x="1116.65" y="286.55" width="1.25" height="1.25"/><rect x="1115.40" y="286.55" width="1.25" height="1.25"/><rect x="1114.15" y="286.55" width="1.25" height="1.25"/><rect x="1112.90" y="286.55" width="1.25" height="1.25"/><rect x="1111.65" y="286.55" width="1.25" height="1.25"/><rect x="1110.40" y="286.55" width="1.25" height="1.25"/><rect x="1109.15" y="286.55" width="1.25" height="1.25"/><rect x="1106.65" y="286.55" width="1.25" height="1.25"/><rect x="1105.40" y="286.55" width="1.25" height="1.25"/><rect x="1043.80" y="287.80" width="1.25" height="1.25"/><rect x="1045.05" y="287.80" width="1.25" height="1.25"/><rect x="1046.30" y="287.80" width="1.25" height="1.25"/><rect x="1047.55" y="287.80" width="1.25" height="1.25"/><rect x="1048.80" y="287.80" width="1.25" height="1.25"/><rect x="1050.05" y="287.80" width="1.25" height="1.25"/><rect x="1051.30" y="287.80" width="1.25" height="1.25"/><rect x="1052.55" y="287.80" width="1.25" height="1.25"/><rect x="1053.80" y="287.80" width="1.25" height="1.25"/><rect x="1058.80" y="287.80" width="1.25" height="1.25"/><rect x="1060.05" y="287.80" width="1.25" height="1.25"/><rect x="1061.30" y="287.80" width="1.25" height="1.25"/><rect x="1062.55" y="287.80" width="1.25" height="1.25"/><rect x="1065.05" y="287.80" width="1.25" height="1.25"/><rect x="1067.55" y="287.80" width="1.25" height="1.25"/><rect x="1068.80" y="287.80" width="1.25" height="1.25"/><rect x="1126.65" y="287.80" width="1.25" height="1.25"/><rect x="1125.40" y="287.80" width="1.25" height="1.25"/><rect x="1124.15" y="287.80" width="1.25" height="1.25"/><rect x="1122.90" y="287.80" width="1.25" height="1.25"/><rect x="1121.65" y="287.80" width="1.25" height="1.25"/><rect x="1120.40" y="287.80" width="1.25" height="1.25"/><rect x="1119.15" y="287.80" width="1.25" height="1.25"/><rect x="1117.90" y="287.80" width="1.25" height="1.25"/><rect x="1116.65" y="287.80" width="1.25" height="1.25"/><rect x="1115.40" y="287.80" width="1.25" height="1.25"/><rect x="1114.15" y="287.80" width="1.25" height="1.25"/><rect x="1111.65" y="287.80" width="1.25" height="1.25"/><rect x="1110.40" y="287.80" width="1.25" height="1.25"/><rect x="1106.65" y="287.80" width="1.25" height="1.25"/><rect x="1105.40" y="287.80" width="1.25" height="1.25"/><rect x="1104.15" y="287.80" width="1.25" height="1.25"/><rect x="1101.65" y="287.80" width="1.25" height="1.25"/><rect x="1100.40" y="287.80" width="1.25" height="1.25"/><rect x="1043.80" y="289.05" width="1.25" height="1.25"/><rect x="1045.05" y="289.05" width="1.25" height="1.25"/><rect x="1046.30" y="289.05" width="1.25" height="1.25"/><rect x="1047.55" y="289.05" width="1.25" height="1.25"/><rect x="1048.80" y="289.05" width="1.25" height="1.25"/><rect x="1050.05" y="289.05" width="1.25" height="1.25"/><rect x="1051.30" y="289.05" width="1.25" height="1.25"/><rect x="1052.55" y="289.05" width="1.25" height="1.25"/><rect x="1053.80" y="289.05" width="1.25" height="1.25"/><rect x="1055.05" y="289.05" width="1.25" height="1.25"/><rect x="1056.30" y="289.05" width="1.25" height="1.25"/><rect x="1057.55" y="289.05" width="1.25" height="1.25"/><rect x="1062.55" y="289.05" width="1.25" height="1.25"/><rect x="1065.05" y="289.05" width="1.25" height="1.25"/><rect x="1066.30" y="289.05" width="1.25" height="1.25"/><rect x="1126.65" y="289.05" width="1.25" height="1.25"/><rect x="1125.40" y="289.05" width="1.25" height="1.25"/><rect x="1122.90" y="289.05" width="1.25" height="1.25"/><rect x="1121.65" y="289.05" width="1.25" height="1.25"/><rect x="1120.40" y="289.05" width="1.25" height="1.25"/><rect x="1117.90" y="289.05" width="1.25" height="1.25"/><rect x="1116.65" y="289.05" width="1.25" height="1.25"/><rect x="1115.40" y="289.05" width="1.25" height="1.25"/><rect x="1114.15" y="289.05" width="1.25" height="1.25"/><rect x="1112.90" y="289.05" width="1.25" height="1.25"/><rect x="1110.40" y="289.05" width="1.25" height="1.25"/><rect x="1107.90" y="289.05" width="1.25" height="1.25"/><rect x="1104.15" y="289.05" width="1.25" height="1.25"/><rect x="1102.90" y="289.05" width="1.25" height="1.25"/><rect x="1099.15" y="289.05" width="1.25" height="1.25"/></g></svg>
<div class="a" style="left:54px;top:365px;width:1102.5px;height:4.8px;border-radius:2.4px;background:#41404b"></div>
<div class="a" style="left:54px;top:365px;width:34.5px;height:4.8px;border-radius:2.4px;background:#15ee8a"></div>
<div class="a" style="left:1122px;top:365px;width:34.5px;height:4.8px;border-radius:2.4px;background:#15ee8a"></div>
<div class="a" style="left:54.8px;top:575.1px;width:67.60px;height:1.80px;background:#2ed87b;"></div>
<div class="a" style="left:54.8px;top:577.4px;width:67.60px;height:25.60px;background:#3f3f4b;"></div>
<div class="a" style="left:54.8px;top:777px;width:67.60px;height:2.00px;background:#2ed87b;"></div>
<div class="a" style="left:54.8px;top:779.6px;width:67.60px;height:22.30px;background:#3f3f4b;"></div>
<div class="a" style="left:123.7px;top:380.8px;width:67.60px;height:195.40px;background:#2ee07e;"></div>
<div class="a" style="left:123.7px;top:577.4px;width:67.60px;height:25.60px;background:#34343e;"></div>
<div class="a" style="left:123.7px;top:604.2px;width:67.60px;height:174.20px;background:#2ee07e;"></div>
<div class="a" style="left:123.7px;top:779.6px;width:67.60px;height:22.30px;background:#34343e;"></div>
<div class="a" style="left:192.60000000000002px;top:380.8px;width:67.60px;height:195.40px;background:#2ee07e;"></div>
<div class="a" style="left:192.60000000000002px;top:577.4px;width:67.60px;height:25.60px;background:#34343e;"></div>
<div class="a" style="left:192.60000000000002px;top:604.2px;width:67.60px;height:174.20px;background:#2ee07e;"></div>
<div class="a" style="left:192.60000000000002px;top:779.6px;width:67.60px;height:22.30px;background:#34343e;"></div>
<div class="a" style="left:261.5px;top:575.1px;width:67.60px;height:1.80px;background:#2ed87b;"></div>
<div class="a" style="left:261.5px;top:577.4px;width:67.60px;height:25.60px;background:#34343e;"></div>
<div class="a" style="left:261.5px;top:604.2px;width:67.60px;height:174.20px;background:#2ee07e;"></div>
<div class="a" style="left:261.5px;top:779.6px;width:67.60px;height:22.30px;background:#34343e;"></div>
<div class="a" style="left:330.40000000000003px;top:380.8px;width:67.60px;height:195.40px;background:#2ee07e;"></div>
<div class="a" style="left:330.40000000000003px;top:577.4px;width:67.60px;height:25.60px;background:#3f3f4b;"></div>
<div class="a" style="left:330.40000000000003px;top:777px;width:67.60px;height:2.00px;background:#2ed87b;"></div>
<div class="a" style="left:330.40000000000003px;top:779.6px;width:67.60px;height:22.30px;background:#3f3f4b;"></div>
<div class="a" style="left:399.3px;top:380.8px;width:67.60px;height:195.40px;background:#2ee07e;"></div>
<div class="a" style="left:399.3px;top:577.4px;width:67.60px;height:25.60px;background:#34343e;"></div>
<div class="a" style="left:399.3px;top:604.2px;width:67.60px;height:174.20px;background:#2ee07e;"></div>
<div class="a" style="left:399.3px;top:779.6px;width:67.60px;height:22.30px;background:#34343e;"></div>
<div class="a" style="left:468.20000000000005px;top:575.1px;width:67.60px;height:1.80px;background:#2ed87b;"></div>
<div class="a" style="left:468.20000000000005px;top:577.4px;width:67.60px;height:25.60px;background:#34343e;"></div>
<div class="a" style="left:468.20000000000005px;top:777px;width:67.60px;height:2.00px;background:#2ed87b;"></div>
<div class="a" style="left:468.20000000000005px;top:779.6px;width:67.60px;height:22.30px;background:#34343e;"></div>
<div class="a" style="left:537.1px;top:380.8px;width:67.60px;height:195.40px;background:#2ee07e;"></div>
<div class="a" style="left:537.1px;top:577.4px;width:67.60px;height:25.60px;background:#34343e;"></div>
<div class="a" style="left:537.1px;top:604.2px;width:67.60px;height:174.20px;background:#2ee07e;"></div>
<div class="a" style="left:537.1px;top:779.6px;width:67.60px;height:22.30px;background:#34343e;"></div>
<div class="a" style="left:606.0px;top:380.8px;width:67.60px;height:195.40px;background:#2ee07e;"></div>
<div class="a" style="left:606.0px;top:577.4px;width:67.60px;height:25.60px;background:#3f3f4b;"></div>
<div class="a" style="left:606.0px;top:604.2px;width:67.60px;height:174.20px;background:#2ee07e;"></div>
<div class="a" style="left:606.0px;top:779.6px;width:67.60px;height:22.30px;background:#3f3f4b;"></div>
<div class="a" style="left:674.9px;top:380.8px;width:67.60px;height:195.40px;background:#2ee07e;"></div>
<div class="a" style="left:674.9px;top:577.4px;width:67.60px;height:25.60px;background:#34343e;"></div>
<div class="a" style="left:674.9px;top:777px;width:67.60px;height:2.00px;background:#2ed87b;"></div>
<div class="a" style="left:674.9px;top:779.6px;width:67.60px;height:22.30px;background:#34343e;"></div>
<div class="a" style="left:743.8px;top:575.1px;width:67.60px;height:1.80px;background:#2ed87b;"></div>
<div class="a" style="left:743.8px;top:577.4px;width:67.60px;height:25.60px;background:#34343e;"></div>
<div class="a" style="left:743.8px;top:777px;width:67.60px;height:2.00px;background:#2ed87b;"></div>
<div class="a" style="left:743.8px;top:779.6px;width:67.60px;height:22.30px;background:#34343e;"></div>
<div class="a" style="left:812.7px;top:380.8px;width:67.60px;height:195.40px;background:#2ee07e;"></div>
<div class="a" style="left:812.7px;top:577.4px;width:67.60px;height:25.60px;background:#34343e;"></div>
<div class="a" style="left:812.7px;top:777px;width:67.60px;height:2.00px;background:#2ed87b;"></div>
<div class="a" style="left:812.7px;top:779.6px;width:67.60px;height:22.30px;background:#34343e;"></div>
<div class="a" style="left:880.70px;top:379.6px;width:69.40px;height:196.6px;background:#98f0bb;border:1px solid #a8f6c8;border-bottom:0"></div>
<div class="a" style="left:881.6px;top:577.4px;width:67.60px;height:25.60px;background:#3f3f4b;"></div>
<div class="a" style="left:880.70px;top:602.9px;width:69.40px;height:175.5px;background:#98f0bb;border:1px solid #a8f6c8;border-bottom:0"></div>
<div class="a" style="left:881.6px;top:779.6px;width:67.60px;height:22.30px;background:#3f3f4b;"></div>
<div class="a" style="left:950.5px;top:575.1px;width:67.60px;height:1.80px;background:#2ed87b;"></div>
<div class="a" style="left:950.5px;top:577.4px;width:67.60px;height:25.60px;background:#34343e;"></div>
<div class="a" style="left:950.5px;top:777px;width:67.60px;height:2.00px;background:#2ed87b;"></div>
<div class="a" style="left:950.5px;top:779.6px;width:67.60px;height:22.30px;background:#34343e;"></div>
<div class="a" style="left:1019.4000000000001px;top:575.1px;width:67.60px;height:1.80px;background:#2ed87b;"></div>
<div class="a" style="left:1019.4000000000001px;top:577.4px;width:67.60px;height:25.60px;background:#34343e;"></div>
<div class="a" style="left:1019.4000000000001px;top:604.2px;width:67.60px;height:174.20px;background:#2ee07e;"></div>
<div class="a" style="left:1019.4000000000001px;top:779.6px;width:67.60px;height:22.30px;background:#34343e;"></div>
<div class="a" style="left:1088.3px;top:380.8px;width:67.60px;height:195.40px;background:#2ee07e;"></div>
<div class="a" style="left:1088.3px;top:577.4px;width:67.60px;height:25.60px;background:#34343e;"></div>
<div class="a" style="left:1088.3px;top:604.2px;width:67.60px;height:174.20px;background:#2ee07e;"></div>
<div class="a" style="left:1088.3px;top:779.6px;width:67.60px;height:22.30px;background:#34343e;"></div>
<div class="a" style="left:25px;top:574.5px;width:17.6px;height:54.3px;background:#34333e;border-radius:0 4px 4px 0"></div>
<div class="a" style="left:1170.2px;top:574.5px;width:17.8px;height:54.3px;background:#34333e;border-radius:4px 0 0 4px"></div>
<svg style="left:0;top:0" width="1" height="1"><g fill="none" stroke="#9aa4b0" stroke-width="1.3" stroke-linecap="round" stroke-linejoin="round"><path d="M34.6,597 L29.2,602.3 L34.6,607.6"/><path d="M1178.2,597 L1183.6,602.3 L1178.2,607.6"/></g></svg>
<div class="a" style="left:54.8px;top:830.5px;width:66.50px;height:31.80px;background:#3f3e4a;border-radius:5px 0 0 5px"></div>
<div class="t" style="left:53.8px;top:842.3px;width:66px;text-align:center;font-size:11px;font-weight:normal;-webkit-text-stroke:.35px #ececf0;letter-spacing:1px;text-indent:1px;color:#ececf0">1</div>
<div class="a" style="left:123.85px;top:830.5px;width:66.50px;height:31.80px;background:#3f3e4a;"></div>
<div class="t" style="left:122.85px;top:842.3px;width:66px;text-align:center;font-size:11px;font-weight:normal;-webkit-text-stroke:.35px #ececf0;letter-spacing:1px;text-indent:1px;color:#ececf0">2</div>
<div class="a" style="left:192.89999999999998px;top:830.5px;width:66.50px;height:31.80px;background:#2ee07e;"></div>
<div class="t" style="left:191.89999999999998px;top:842.3px;width:66px;text-align:center;font-size:11px;font-weight:normal;-webkit-text-stroke:.35px #ececf0;letter-spacing:1px;text-indent:1px;color:#ececf0">3</div>
<div class="a" style="left:261.95px;top:830.5px;width:66.50px;height:31.80px;background:#33333e;"></div>
<svg style="left:0;top:0" width="1" height="1"><path stroke="#9aa4b0" stroke-width="1.2" d="M292.75,846.5 H297.15 M294.95,844.3 V848.7"/></svg>
<div class="a" style="left:331.0px;top:830.5px;width:66.50px;height:31.80px;background:#33333e;"></div>
<svg style="left:0;top:0" width="1" height="1"><path stroke="#9aa4b0" stroke-width="1.2" d="M361.8,846.5 H366.2 M364.0,844.3 V848.7"/></svg>
<div class="a" style="left:400.05px;top:830.5px;width:66.50px;height:31.80px;background:#33333e;"></div>
<svg style="left:0;top:0" width="1" height="1"><path stroke="#9aa4b0" stroke-width="1.2" d="M430.85,846.5 H435.25 M433.05,844.3 V848.7"/></svg>
<div class="a" style="left:469.09999999999997px;top:830.5px;width:66.50px;height:31.80px;background:#33333e;"></div>
<svg style="left:0;top:0" width="1" height="1"><path stroke="#9aa4b0" stroke-width="1.2" d="M499.9,846.5 H504.29999999999995 M502.09999999999997,844.3 V848.7"/></svg>
<div class="a" style="left:538.15px;top:830.5px;width:66.50px;height:31.80px;background:#33333e;"></div>
<svg style="left:0;top:0" width="1" height="1"><path stroke="#9aa4b0" stroke-width="1.2" d="M568.9499999999999,846.5 H573.35 M571.15,844.3 V848.7"/></svg>
<div class="a" style="left:607.1999999999999px;top:830.5px;width:66.50px;height:31.80px;background:#3f3e4a;"></div>
<div class="t" style="left:606.1999999999999px;top:842.3px;width:66px;text-align:center;font-size:11px;font-weight:normal;-webkit-text-stroke:.35px #ececf0;letter-spacing:1px;text-indent:1px;color:#ececf0">9</div>
<div class="a" style="left:676.2499999999999px;top:830.5px;width:66.50px;height:31.80px;background:#3f3e4a;"></div>
<div class="t" style="left:675.2499999999999px;top:842.3px;width:66px;text-align:center;font-size:11px;font-weight:normal;-webkit-text-stroke:.35px #ececf0;letter-spacing:1px;text-indent:1px;color:#ececf0">10</div>
<div class="a" style="left:745.3px;top:830.5px;width:66.50px;height:31.80px;background:#3f3e4a;"></div>
<div class="t" style="left:744.3px;top:842.3px;width:66px;text-align:center;font-size:11px;font-weight:normal;-webkit-text-stroke:.35px #ececf0;letter-spacing:1px;text-indent:1px;color:#ececf0">11</div>
<div class="a" style="left:814.3499999999999px;top:830.5px;width:66.50px;height:31.80px;background:#33333e;"></div>
<svg style="left:0;top:0" width="1" height="1"><path stroke="#9aa4b0" stroke-width="1.2" d="M845.1499999999999,846.5 H849.55 M847.3499999999999,844.3 V848.7"/></svg>
<div class="a" style="left:883.3999999999999px;top:830.5px;width:66.50px;height:31.80px;background:#33333e;"></div>
<svg style="left:0;top:0" width="1" height="1"><path stroke="#9aa4b0" stroke-width="1.2" d="M914.1999999999998,846.5 H918.5999999999999 M916.3999999999999,844.3 V848.7"/></svg>
<div class="a" style="left:952.4499999999999px;top:830.5px;width:66.50px;height:31.80px;background:#33333e;"></div>
<svg style="left:0;top:0" width="1" height="1"><path stroke="#9aa4b0" stroke-width="1.2" d="M983.2499999999999,846.5 H987.65 M985.4499999999999,844.3 V848.7"/></svg>
<div class="a" style="left:1021.4999999999999px;top:830.5px;width:66.50px;height:31.80px;background:#33333e;"></div>
<svg style="left:0;top:0" width="1" height="1"><path stroke="#9aa4b0" stroke-width="1.2" d="M1052.3,846.5 H1056.7 M1054.5,844.3 V848.7"/></svg>
<div class="a" style="left:1090.55px;top:830.5px;width:66.50px;height:31.80px;background:#33333e;border-radius:0 5px 5px 0"></div>
<svg style="left:0;top:0" width="1" height="1"><path stroke="#9aa4b0" stroke-width="1.2" d="M1121.35,846.5 H1125.75 M1123.55,844.3 V848.7"/></svg>
<svg style="left:0;top:0" width="1" height="1"><path fill="#6a6977" d="M1170.6,841.4 H1180 A1.8,1.8 0 0,1 1181.8,843.2 V849.8 A1.8,1.8 0 0,1 1180,851.6 H1170.6 L1166.8,846.5 Z"/><path stroke="#2a2a33" stroke-width="1.25" d="M1173.3,844.7 L1176.9,848.3 M1176.9,844.7 L1173.3,848.3"/></svg>
</body></html>
